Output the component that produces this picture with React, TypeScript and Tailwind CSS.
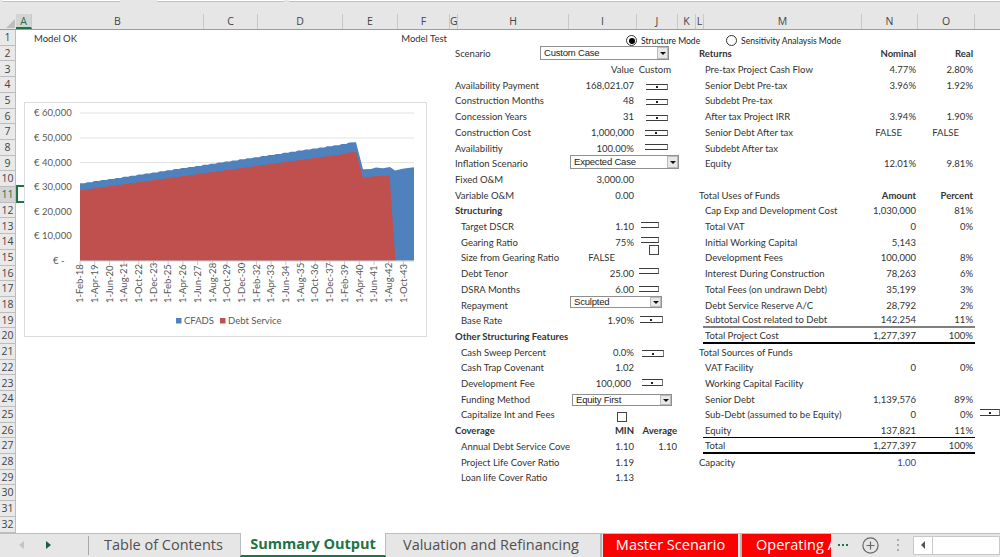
import { Fragment } from "react";

type Row = {
  num: number;
  left?: string;
  leftRight?: string;
  label?: string;
  sub?: boolean;
  bold?: boolean;
  i?: string;
  iBold?: boolean;
  iCenter?: boolean;
  iTight?: boolean;
  j?: string;
  jBold?: boolean;
  jTight?: boolean;
  m?: string;
  mSub?: boolean;
  mBold?: boolean;
  n?: string;
  o?: string;
  headBold?: boolean;
  falseCells?: boolean;
  blue?: boolean;
  rule?: "gray" | "thin" | "thick";
};

const columns = [
  { name: "A", cls: "w-[16px] bg-[#d4d4d4] text-[#217346] border-b-2 border-b-[#217346]" },
  { name: "B", cls: "w-[172px]" },
  { name: "C", cls: "w-[54px]" },
  { name: "D", cls: "w-[85px]" },
  { name: "E", cls: "w-[55px]" },
  { name: "F", cls: "w-[52px]" },
  { name: "G", cls: "w-[8px]" },
  { name: "H", cls: "w-[111px]" },
  { name: "I", cls: "w-[68px]" },
  { name: "J", cls: "w-[41px]" },
  { name: "K", cls: "w-[18px]" },
  { name: "L", cls: "w-[8px]" },
  { name: "M", cls: "w-[158px]" },
  { name: "N", cls: "w-[56px]" },
  { name: "O", cls: "w-[57px]" },
];

const rows: Row[] = [
  { num: 1, left: "Model OK", leftRight: "Model Test" },
  { num: 2, label: "Scenario", m: "Returns", mBold: true, n: "Nominal", o: "Real", headBold: true },
  { num: 3, i: "Value", j: "Custom", jTight: true, m: "Pre-tax Project Cash Flow", mSub: true, n: "4.77%", o: "2.80%" },
  { num: 4, label: "Availability Payment", i: "168,021.07", m: "Senior Debt Pre-tax", mSub: true, n: "3.96%", o: "1.92%" },
  { num: 5, label: "Construction Months", i: "48", m: "Subdebt Pre-tax", mSub: true },
  { num: 6, label: "Concession Years", i: "31", m: "After tax Project IRR", mSub: true, n: "3.94%", o: "1.90%" },
  { num: 7, label: "Construction Cost", i: "1,000,000", m: "Senior Debt After tax", mSub: true, n: "FALSE", o: "FALSE", falseCells: true },
  { num: 8, label: "Availabilitiy", i: "100.00%", m: "Subdebt After tax", mSub: true },
  { num: 9, label: "Inflation Scenario", m: "Equity", mSub: true, n: "12.01%", o: "9.81%" },
  { num: 10, label: "Fixed O&M", i: "3,000.00" },
  { num: 11, label: "Variable O&M", i: "0.00", m: "Total Uses of Funds", n: "Amount", o: "Percent", headBold: true },
  { num: 12, label: "Structuring", bold: true, m: "Cap Exp and Development Cost", mSub: true, n: "1,030,000", o: "81%" },
  { num: 13, label: "Target DSCR", sub: true, i: "1.10", m: "Total VAT", mSub: true, n: "0", o: "0%" },
  { num: 14, label: "Gearing Ratio", sub: true, i: "75%", m: "Initial Working Capital", mSub: true, n: "5,143" },
  { num: 15, label: "Size from Gearing Ratio", sub: true, i: "FALSE", iCenter: true, m: "Development Fees", mSub: true, n: "100,000", o: "8%" },
  { num: 16, label: "Debt Tenor", sub: true, i: "25.00", m: "Interest During Construction", mSub: true, n: "78,263", o: "6%" },
  { num: 17, label: "DSRA Months", sub: true, i: "6.00", m: "Total Fees (on undrawn Debt)", mSub: true, n: "35,199", o: "3%" },
  { num: 18, label: "Repayment", sub: true, m: "Debt Service Reserve A/C", mSub: true, n: "28,792", o: "2%" },
  { num: 19, label: "Base Rate", sub: true, i: "1.90%", m: "Subtotal Cost related to Debt", mSub: true, n: "142,254", o: "11%", rule: "gray" },
  { num: 20, label: "Other Structuring Features", bold: true, m: "Total Project Cost", mSub: true, n: "1,277,397", o: "100%", rule: "thick" },
  { num: 21, label: "Cash Sweep Percent", sub: true, i: "0.0%", m: "Total Sources of Funds" },
  { num: 22, label: "Cash Trap Covenant", sub: true, i: "1.02", m: "VAT Facility", mSub: true, n: "0", o: "0%" },
  { num: 23, label: "Development Fee", sub: true, i: "100,000", iTight: true, m: "Working Capital Facility", mSub: true },
  { num: 24, label: "Funding Method", sub: true, m: "Senior Debt", mSub: true, n: "1,139,576", o: "89%" },
  { num: 25, label: "Capitalize Int and Fees", sub: true, m: "Sub-Debt (assumed to be Equity)", mSub: true, n: "0", o: "0%" },
  { num: 26, label: "Coverage", bold: true, i: "MIN", iBold: true, j: "Average", jBold: true, m: "Equity", mSub: true, n: "137,821", o: "11%", rule: "thin" },
  { num: 27, label: "Annual Debt Service Cove", sub: true, i: "1.10", j: "1.10", m: "Total", mSub: true, n: "1,277,397", o: "100%", rule: "thick" },
  { num: 28, label: "Project Life Cover Ratio", sub: true, i: "1.19", m: "Capacity", n: "1.00", blue: true },
  { num: 29, label: "Loan life Cover Ratio", sub: true, i: "1.13" },
  { num: 30 },
  { num: 31 },
  { num: 32 },
];

const dates = [
  "1-Feb-18", "1-Apr-19", "1-Jun-20", "1-Aug-21", "1-Oct-22", "1-Dec-23", "1-Feb-25", "1-Apr-26",
  "1-Jun-27", "1-Aug-28", "1-Oct-29", "1-Dec-30", "1-Feb-32", "1-Apr-33", "1-Jun-34", "1-Aug-35",
  "1-Oct-36", "1-Dec-37", "1-Feb-39", "1-Apr-40", "1-Jun-41", "1-Aug-42", "1-Oct-43",
];

const yAxis = [
  { text: "€ 60,000", y: 113 },
  { text: "€ 50,000", y: 138 },
  { text: "€ 40,000", y: 162.6 },
  { text: "€ 30,000", y: 187 },
  { text: "€ 20,000", y: 211.6 },
  { text: "€ 10,000", y: 236.2 },
];

// small stairs along the slowly rising part of the series
function stairs(x1: number, y1: number, x2: number, y2: number) {
  const out: string[] = [];
  const count = Math.round((x2 - x1) / 7.3);
  for (let k = 0; k < count; k++) {
    const x = x1 + ((x2 - x1) * k) / count;
    const y = y1 + ((y2 - y1) * k) / count;
    out.push(`${x.toFixed(1)},${y.toFixed(1)} ${(x + 4.5).toFixed(1)},${y.toFixed(1)}`);
  }
  return out.join(" ");
}

const cfads = `80,260.7 ${stairs(80, 183.3, 349, 143)} 349,142.5 356,142.3 363,169.3 371,169 376,167.6 383,168.2 390,167 395,170.6 404,168.6 414,167.2 414,260.7`;
const debtService = `80,260.7 ${stairs(80, 190, 349, 153)} 349,152.6 356,152 363,177.8 375,176.2 389.5,175.7 395.5,260.7`;

function Spinner({ className, dot = true }: { className: string; dot?: boolean }) {
  return (
    <div className={`absolute flex items-end justify-center border-y border-r border-y-[#3c3c3c] border-r-[#777] ${className}`}>
      {dot && <div className="mb-[1px] h-[2px] w-[2px] bg-[#222]" />}
    </div>
  );
}

function Combo({ className, text }: { className: string; text: string }) {
  return (
    <div className={`absolute flex items-center border border-[#8f8f8f] bg-white pl-[3px] font-['Liberation_Sans',sans-serif] text-[9.5px] tracking-[-0.2px] text-[#222] ${className}`}>
      <span className="flex-1">{text}</span>
      <div className="flex h-full w-[11px] items-center justify-center border border-[#bbb] bg-[#e8e8e8]">
        <div className="h-0 w-0 border-x-[3px] border-t-[3px] border-x-transparent border-t-[#111]" />
      </div>
    </div>
  );
}

function Check({ className }: { className: string }) {
  return <div className={`absolute h-[10px] w-[10px] border border-[#444] bg-white ${className}`} />;
}

function Chart() {
  return (
    <div className="absolute left-[24px] top-[102px] h-[235px] w-[403px] border border-[#dcdcdc] bg-white">
      <svg viewBox="25 103 401 233" className="h-full w-full font-['Lato',sans-serif] text-[9.5px]">
        {yAxis.map((t) => (
          <Fragment key={t.text}>
            <line x1="80" x2="414" y1={t.y} y2={t.y} stroke="#e2e2e2" />
            <text x="34" y={t.y + 3.2} fill="#595959">{t.text}</text>
          </Fragment>
        ))}
        <polygon points={cfads} fill="#4f81bd" />
        <polygon points={debtService} fill="#c0504d" />
        <line x1="80" x2="414" y1="261" y2="261" stroke="#d0d0d0" />
        <text x="53" y="264" fill="#595959">€ -</text>
        {dates.map((d, idx) => {
          const x = 80 + idx * 14.7;
          return (
            <Fragment key={d}>
              <line x1={x} x2={x} y1="261" y2="265" stroke="#c8c8c8" />
              <text transform={`translate(${x + 3.2} 303) rotate(-90)`} fill="#595959">{d}</text>
            </Fragment>
          );
        })}
        <rect x="176" y="318" width="5.5" height="5.5" fill="#4f81bd" />
        <text x="184" y="324" fill="#595959">CFADS</text>
        <rect x="220" y="318" width="5.5" height="5.5" fill="#c0504d" />
        <text x="228" y="324" fill="#595959">Debt Service</text>
      </svg>
    </div>
  );
}

function SheetRow({ row }: { row: Row }) {
  const ruleCls =
    row.rule === "gray"
      ? "border-b-2 border-b-[#7f7f7f]"
      : row.rule === "thick"
        ? "border-b-2 border-b-black"
        : row.rule === "thin"
          ? "border-b border-b-black"
          : "";
  return (
    <div className="flex h-[15.71px] items-center leading-none">
      <div className={`flex h-full w-[16px] shrink-0 items-center justify-center border-b border-r border-[#bdbdbd] font-['Open_Sans',sans-serif] text-[10.5px] ${row.num === 11 ? "bg-[#d4d4d4] text-[#217346]" : "bg-[#e9e9e9] text-[#444]"}`}>
        {row.num}
      </div>
      <div className="flex w-[432px] shrink-0 justify-between pl-[18px] pr-[1px] pt-[1px]">
        <span>{row.left}</span>
        {row.leftRight && <span>{row.leftRight}</span>}
      </div>
      <div className={`w-[121px] shrink-0 whitespace-nowrap pt-[1px] ${row.sub ? "pl-[13px]" : "pl-[7px]"} ${row.bold ? "font-bold" : ""}`}>
        {row.label}
      </div>
      <div className={`w-[68px] shrink-0 whitespace-nowrap pt-[1px] ${row.iCenter ? "pr-[22px] text-right" : row.iTight ? "pr-[6px] text-right" : "pr-[3px] text-right"} ${row.iBold ? "font-bold" : ""}`}>
        {row.i}
      </div>
      <div className={`w-[41px] shrink-0 whitespace-nowrap pt-[1px] text-right ${row.jTight ? "pr-[7px]" : "pr-[1px]"} ${row.jBold ? "font-bold" : ""}`}>{row.j}</div>
      <div className="w-[25px] shrink-0" />
      <div className={`flex h-full w-[272px] shrink-0 items-center pt-[1px] ${ruleCls}`}>
        <div className={`w-[159px] shrink-0 whitespace-nowrap ${row.mSub ? "pl-[2px]" : "-ml-[4px] mr-[4px]"} ${row.mBold ? "font-bold" : ""}`}>
          {row.m}
        </div>
        <div className={`w-[56px] shrink-0 ${row.falseCells ? "pr-[16px]" : "pr-[2px]"} text-right ${row.headBold ? "font-bold" : ""} ${row.blue ? "text-[#2f3fa8]" : ""}`}>
          {row.n}
        </div>
        <div className={`w-[57px] shrink-0 ${row.falseCells ? "pr-[16px]" : "pr-[2px]"} text-right ${row.headBold ? "font-bold" : ""}`}>
          {row.o}
        </div>
      </div>
    </div>
  );
}

export default function App() {
  return (
    <div className="relative flex h-[557px] w-[1000px] flex-col overflow-hidden bg-white font-['Lato',sans-serif] text-[9.5px] text-[#333]">
      {/* resto de la barra de fórmulas */}
      <div className="flex h-[14px] shrink-0 items-start gap-[5px] bg-[#e6e6e6] pl-[3px]">
        <div className="h-[2px] w-[117px] border-b border-[#c0c0c0] bg-white" />
        <div className="ml-[32px] h-[2px] w-[127px] border-b border-[#c0c0c0] bg-white" />
        <div className="h-[2px] flex-1 border-b border-[#c0c0c0] bg-white" />
      </div>

      {/* cabecera de columnas */}
      <div className="flex h-[16px] shrink-0 border-b border-[#9c9c9c] bg-[#e6e6e6] font-['Open_Sans',sans-serif] text-[10.5px] leading-[15px] text-[#444]">
        <div className="relative w-[16px] shrink-0 overflow-hidden">
          <div className="absolute bottom-[1px] right-[1px] h-0 w-0 border-b-[9px] border-l-[9px] border-b-[#bdbdbd] border-l-transparent" />
        </div>
        {columns.map((c) => (
          <div key={c.name} className={`shrink-0 overflow-hidden border-r border-[#c8c8c8] text-center ${c.cls}`}>
            {c.name}
          </div>
        ))}
      </div>

      {/* hoja */}
      <div className="flex-1 overflow-hidden">
        {rows.map((r) => (
          <SheetRow key={r.num} row={r} />
        ))}
      </div>

      {/* pestañas */}
      <div className="flex h-[24.5px] shrink-0 items-stretch border-t border-[#bdbdbd] bg-[#e6e6e6] font-['Open_Sans',sans-serif] text-[14.5px] text-[#505050]">
        <div className="my-[2px] flex w-[89px] shrink-0 items-center border-r border-[#a8a8a8] pl-[19px]">
          <div className="h-0 w-0 border-y-[4px] border-r-[5px] border-y-transparent border-r-[#c4c4c4]" />
          <div className="ml-[22px] h-0 w-0 border-y-[4px] border-l-[5px] border-y-transparent border-l-[#1e5e3c]" />
        </div>
        <div className="flex w-[151px] shrink-0 items-center whitespace-nowrap pl-[15px]">Table of Contents</div>
        <div className="-mt-px flex w-[146px] shrink-0 items-center justify-center whitespace-nowrap border-x border-b-2 border-x-[#bdbdbd] border-b-[#217346] bg-white font-bold text-[#217346]">
          Summary Output
        </div>
        <div className="flex w-[216px] shrink-0 items-center whitespace-nowrap border-r-2 border-[#b5b5b5] pl-[17px]">
          Valuation and Refinancing
        </div>
        <div className="ml-[1px] flex w-[135px] shrink-0 items-center justify-center whitespace-nowrap bg-[#ff0000] text-white">
          Master Scenario
        </div>
        <div className="w-[4px] shrink-0 border-r-2 border-[#b5b5b5]" />
        <div className="flex w-[89px] shrink-0 items-center overflow-hidden whitespace-nowrap bg-[#ff0000] pl-[14px] text-white">
          Operating Acc
        </div>
        <div className="ml-[7px] flex w-[16px] items-center gap-[2px]">
          <span className="h-[2px] w-[2px] bg-[#217346]" />
          <span className="h-[2px] w-[2px] bg-[#217346]" />
          <span className="h-[2px] w-[2px] bg-[#217346]" />
        </div>
        <div className="ml-[8px] flex w-[17px] items-center">
          <svg viewBox="0 0 17 17" className="h-[17px] w-[17px]" fill="none" stroke="#666" strokeWidth="1.2">
            <circle cx="8.5" cy="8.5" r="7.6" />
            <path d="M8.5 4.5v8M4.5 8.5h8" />
          </svg>
        </div>
        <div className="ml-[18px] flex w-[2px] flex-col items-center justify-center gap-[3px]">
          <span className="h-[2px] w-[2px] bg-[#aaa]" />
          <span className="h-[2px] w-[2px] bg-[#aaa]" />
          <span className="h-[2px] w-[2px] bg-[#aaa]" />
        </div>
        <div className="my-[2px] ml-[14px] flex flex-1 border border-[#c8c8c8] bg-white">
          <div className="flex w-[19px] items-center justify-center border-r border-[#c8c8c8]">
            <div className="h-0 w-0 border-y-[4px] border-r-[4px] border-y-transparent border-r-[#555]" />
          </div>
        </div>
      </div>

      {/* objetos flotantes sobre la hoja */}
      <div className="absolute left-[16px] top-[185px] h-[18px] w-[16px] border-2 border-[#217346]" />
      <Chart />

      <div className="absolute left-[626px] top-[35px] flex h-[11px] w-[11px] items-center justify-center rounded-full border border-[#333] bg-white">
        <div className="h-[6px] w-[6px] rounded-full bg-black" />
      </div>
      <span className="absolute left-[641px] top-[35px] text-[8.6px] text-[#222]">Structure Mode</span>
      <div className="absolute left-[726px] top-[35px] h-[11px] w-[11px] rounded-full border border-[#333] bg-white" />
      <span className="absolute left-[741px] top-[35px] text-[8.6px] text-[#222]">Sensitivity Analaysis Mode</span>

      <Combo className="left-[540px] top-[46px] h-[14px] w-[129px]" text="Custom Case" />
      <Combo className="left-[570px] top-[155px] h-[14px] w-[109px]" text="Expected Case" />
      <Combo className="left-[570px] top-[296px] h-[12px] w-[92px]" text="Sculpted" />
      <Combo className="left-[572px] top-[394px] h-[12px] w-[100px]" text="Equity First" />

      <Spinner className="left-[646px] top-[84px] h-[6px] w-[22px]" />
      <Spinner className="left-[646px] top-[99px] h-[6px] w-[22px]" />
      <Spinner className="left-[646px] top-[115px] h-[6px] w-[22px]" />
      <Spinner className="left-[645px] top-[130px] h-[6px] w-[23px]" />
      <Spinner className="left-[645px] top-[144px] h-[6px] w-[23px]" dot={false} />
      <Spinner className="left-[641px] top-[222px] h-[6px] w-[18px]" dot={false} />
      <Spinner className="left-[641px] top-[237px] h-[6px] w-[18px]" dot={false} />
      <Spinner className="left-[639px] top-[268px] h-[6px] w-[20px]" dot={false} />
      <Spinner className="left-[639px] top-[286px] h-[6px] w-[20px]" dot={false} />
      <Spinner className="left-[640px] top-[316px] h-[7px] w-[23px]" />
      <Spinner className="left-[642px] top-[350px] h-[7px] w-[22px]" />
      <Spinner className="left-[642px] top-[379px] h-[7px] w-[21px]" />
      <Spinner className="left-[980px] top-[409px] h-[7px] w-[20px]" />

      <Check className="left-[649px] top-[245px]" />
      <Check className="left-[617px] top-[412px]" />
    </div>
  );
}
